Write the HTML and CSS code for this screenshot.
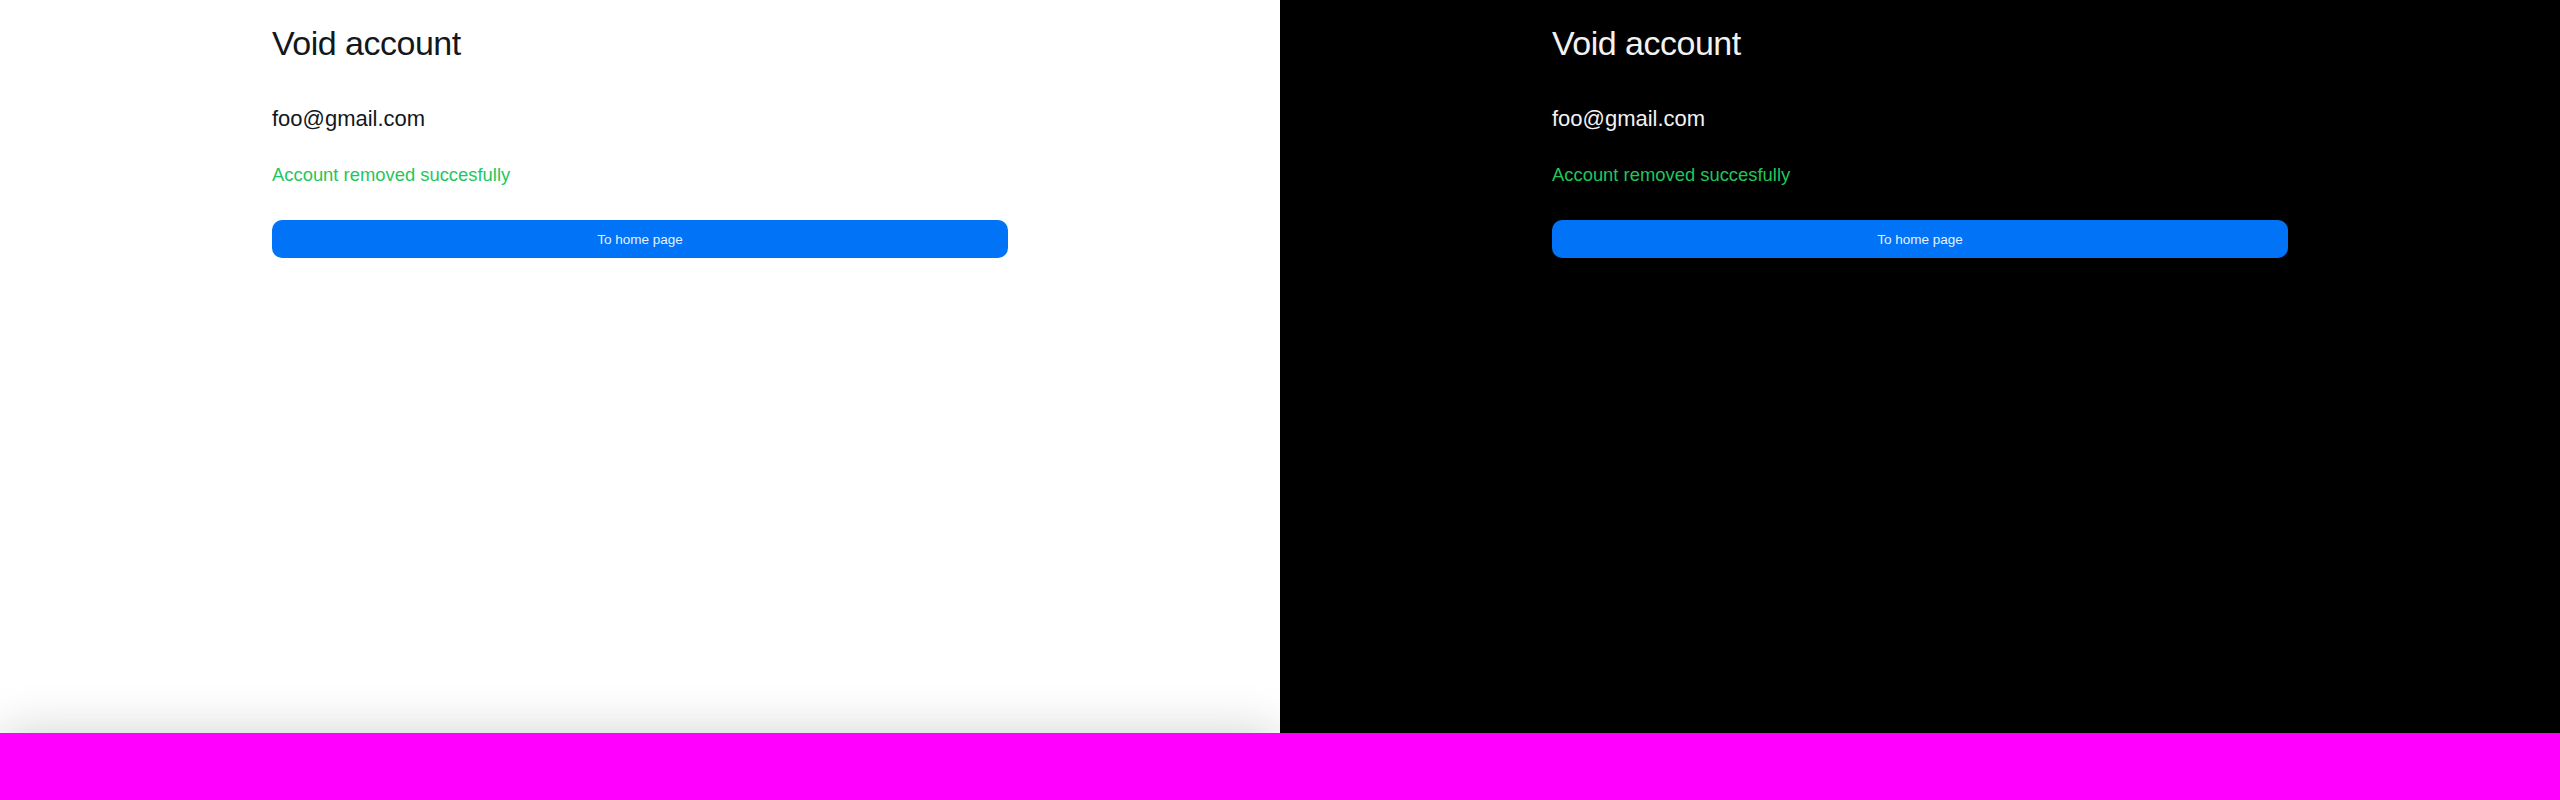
FILE: index.html
```html
<!DOCTYPE html>
<html lang="en">
<head>
<meta charset="utf-8">
<title>Void account</title>
<link rel="stylesheet" href="styles.css">
</head>
<body>
<div class="panels">
  <section class="panel panel-light">
    <div class="content">
      <h1 class="title">Void account</h1>
      <p class="email">foo@gmail.com</p>
      <p class="success">Account removed succesfully</p>
      <button class="btn" type="button">To home page</button>
    </div>
  </section>
  <section class="panel panel-dark">
    <div class="content">
      <h1 class="title">Void account</h1>
      <p class="email">foo@gmail.com</p>
      <p class="success">Account removed succesfully</p>
      <button class="btn" type="button">To home page</button>
    </div>
  </section>
</div>
<div class="bar">
  <div class="bar-half bar-left"></div>
  <div class="bar-half bar-right"></div>
</div>
</body>
</html>
```

FILE: styles.css
```css
html, body {
  margin: 0;
  padding: 0;
  width: 2560px;
  height: 800px;
  overflow: hidden;
  font-family: "Liberation Sans", Arial, sans-serif;
}

body {
  display: flex;
  flex-direction: column;
}

.panels {
  display: flex;
  height: 733px;
}

.panel {
  width: 1280px;
  display: flex;
  justify-content: center;
}

.panel-light {
  background: #ffffff;
  color: #12181c;
}

.panel-dark {
  background: #000000;
  color: #f2f2f2;
}

.content {
  width: 736px;
  display: flex;
  flex-direction: column;
  padding-top: 23px;
}

.title {
  margin: 0;
  font-size: 34px;
  line-height: 40px;
  font-weight: 400;
  letter-spacing: -0.5px;
}

.email {
  margin: 42px 0 0;
  font-size: 22px;
  line-height: 28px;
}

.success {
  margin: 31px 0 0;
  font-size: 18.4px;
  line-height: 22px;
  color: #1fc65d;
}

.btn {
  margin-top: 34px;
  height: 38px;
  border: none;
  border-radius: 10px;
  background: #0073f7;
  color: #e8f0ff;
  font-family: "Liberation Sans", Arial, sans-serif;
  font-size: 13.5px;
  padding: 0;
  cursor: pointer;
}

.bar {
  display: flex;
  height: 67px;
}

.bar-half {
  width: 1280px;
  background: #ff00ff;
}

.bar-left {
  box-shadow: 0 0 50px rgba(0, 20, 20, 0.2);
}
```
